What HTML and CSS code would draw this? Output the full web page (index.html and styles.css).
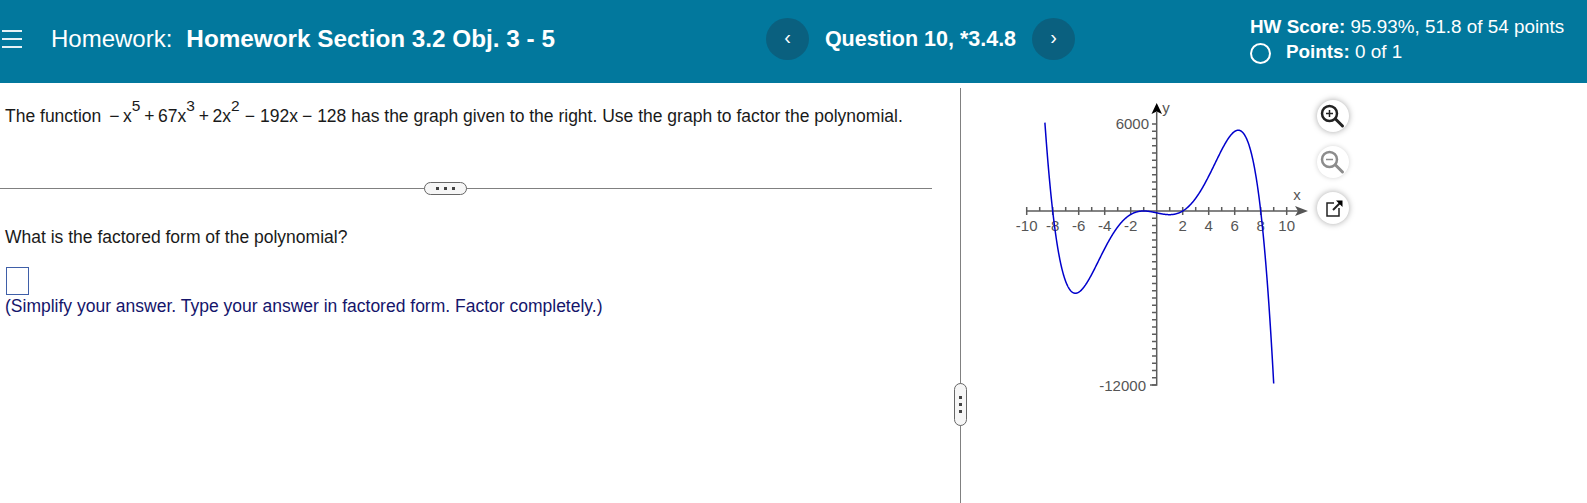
FILE: index.html
```html
<!DOCTYPE html>
<html lang="en">
<head>
  <meta charset="UTF-8" />
  <title>Homework Section 3.2 Obj. 3 - 5</title>
  <link rel="stylesheet" href="styles.css">
</head>
<body>

<!-- top bar -->
<header class="topbar">
  <div class="topbar-left">
    <div class="menu-icon"><span></span><span></span><span></span></div>
    <div class="hw-title">Homework:<b>Homework Section 3.2 Obj. 3 - 5</b></div>
  </div>
  <div class="topbar-nav">
    <div class="nav-btn">&#8249;</div>
    <div class="question-name">Question 10, *3.4.8</div>
    <div class="nav-btn">&#8250;</div>
  </div>
  <div class="topbar-score">
    <div><b>HW Score:</b> 95.93%, 51.8 of 54 points</div>
    <div class="points-row"><span class="points-ring"></span><span><b>Points:</b> 0 of 1</span></div>
  </div>
</header>

<main class="workspace">
  <!-- question text -->
  <section class="question-pane">
    <p class="statement">The function <span class="math"><span class="op">&minus;</span>x<sup>5</sup><span class="op">+</span>67x<sup>3</sup><span class="op">+</span>2x<sup>2</sup><span class="op op-wide">&minus;</span>192x<span class="op op-wide">&minus;</span>128</span> has the graph given to the right. Use the graph to factor the polynomial.</p>
    <div class="separator"><span class="more-pill"><i></i><i></i><i></i></span></div>
    <p class="prompt">What is the factored form of the polynomial?</p>
    <div class="answer-box"></div>
    <p class="hint">(Simplify your answer. Type your answer in factored form. Factor completely.)</p>
  </section>

  <div class="divider"><span class="divider-handle"><i></i><i></i><i></i></span></div>

  <!-- graph and its tools -->
  <section class="graph-pane">
    <svg id="graph" class="graph" width="310" height="305" viewBox="1000 90 310 305">
      <g id="ticks" class="ticks"></g>
      <path class="axis" d="M1026.7 211H1298M1156.7 112V385H1150"/>
      <path class="arrow-x" d="M1295 206L1308 211L1295 216L1298 211Z"/>
      <path class="arrow-y" d="M1156.7 103L1162 114L1156.7 111.5L1151.5 114Z"/>
      <g class="labels">
        <text x="1026.7" y="231">-10</text>
        <text x="1052.7" y="231">-8</text>
        <text x="1078.7" y="231">-6</text>
        <text x="1104.7" y="231">-4</text>
        <text x="1130.7" y="231">-2</text>
        <text x="1182.7" y="231">2</text>
        <text x="1208.7" y="231">4</text>
        <text x="1234.7" y="231">6</text>
        <text x="1260.7" y="231">8</text>
        <text x="1286.7" y="231">10</text>
        <text x="1297" y="200">x</text>
        <text x="1166" y="113">y</text>
        <text class="y-label" x="1149" y="129">6000</text>
        <text class="y-label" x="1146" y="391">-12000</text>
      </g>
      <path id="curve" class="curve"/>
    </svg>
    <div class="tools">
      <div class="tool-btn">
        <svg width="26" height="26" viewBox="0 0 26 26"><circle cx="9.500" cy="10.500" r="7.500" class="lens"/><path class="lens-mark" d="M6 10.500h7M9.500 7v7"/><path class="lens-handle" d="M15.500 16l7 7"/></svg>
      </div>
      <div class="tool-btn tool-off">
        <svg width="26" height="26" viewBox="0 0 26 26"><circle cx="9.500" cy="10.500" r="7.500" class="lens"/><path class="lens-mark" d="M6 10.500h7"/><path class="lens-handle" d="M15.500 16l7 7"/></svg>
      </div>
      <div class="tool-btn">
        <svg width="24" height="24" viewBox="0 0 24 24"><path class="popout" d="M13 7H6V20H18V12"/><path class="popout-arrow" d="M12 14L19 7"/><path d="M15 4.500H21.500V11Z"/></svg>
      </div>
    </div>
  </section>
</main>

<script src="graph.js"></script>
</body>
</html>
```

FILE: styles.css
```css
body {
  margin: 0;
  background: #fff;
  color: #1a1a1a;
  font-family: "Liberation Sans", Arial, sans-serif;
  overflow: hidden;
}

/* top bar */
.topbar {
  display: flex;
  align-items: center;
  height: 83px;
  padding-bottom: 5px;
  box-sizing: border-box;
  background: #02789d;
  color: #fff;
}

.topbar-left {
  display: flex;
  align-items: center;
  width: 766px;
  padding-left: 2px;
  box-sizing: border-box;
}

.menu-icon {
  display: flex;
  flex-direction: column;
  gap: 6px;
  width: 20px;
  margin-right: 29px;
}

.menu-icon span {
  height: 2px;
  background: #e6f2f6;
}

.hw-title {
  font-size: 24px;
}

.hw-title b {
  margin-left: 14px;
  font-size: 24.300px;
}

.topbar-nav {
  display: flex;
  align-items: center;
  width: 484px;
  box-sizing: border-box;
}

.nav-btn {
  width: 43px;
  height: 42px;
  line-height: 39px;
  border-radius: 50%;
  background: #0a607f;
  text-align: center;
  font-size: 20px;
}

.question-name {
  width: 223px;
  text-align: center;
  font-size: 21.500px;
  font-weight: bold;
}

.topbar-score {
  font-size: 18.850px;
  line-height: 24px;
  margin-top: 1px;
}

.points-row {
  display: flex;
  align-items: center;
  gap: 15px;
}

.points-ring {
  width: 17px;
  height: 17px;
  border: 2px solid #fff;
  border-radius: 50%;
  margin-top: 4px;
}

/* main area */
.workspace {
  display: flex;
  height: 420px;
}

.question-pane {
  width: 932px;
  font-size: 17.500px;
}

.question-pane p {
  margin: 0;
  padding-left: 5px;
}

.statement {
  padding-top: 22px;
  line-height: 22px;
}

.math .op {
  margin: 0 3.500px 0 3px;
}

.math .op-wide {
  margin: 0 5px 0 4px;
}

.math sup {
  font-size: 15.500px;
  line-height: 0;
  vertical-align: 11px;
  margin-right: 1px;
}

.separator {
  position: relative;
  height: 1px;
  margin-top: 61px;
  background: #808080;
}

.more-pill {
  position: absolute;
  left: 424px;
  top: -6px;
  display: flex;
  align-items: center;
  justify-content: center;
  gap: 5px;
  width: 41px;
  height: 11px;
  border: 1px solid #666;
  border-radius: 7px;
  background: #f6f6f6;
}

.more-pill i,
.divider-handle i {
  width: 3px;
  height: 3px;
  background: #444;
}

.prompt {
  margin-top: 38px !important;
  line-height: 20px;
}

.answer-box {
  width: 21px;
  height: 26px;
  margin: 20px 0 0 6px;
  border: 1px solid #3f5fa8;
}

.hint {
  margin-top: 0 !important;
  line-height: 22px;
  color: #15156b;
}

.divider {
  position: relative;
  width: 1px;
  height: 415px;
  margin: 5px 0 0 28px;
  background: #808080;
}

.divider-handle {
  position: absolute;
  left: -6px;
  top: 295px;
  display: flex;
  flex-direction: column;
  align-items: center;
  justify-content: center;
  gap: 4px;
  width: 11px;
  height: 41px;
  border: 1px solid #666;
  border-radius: 7px;
  background: #f6f6f6;
}

.graph-pane {
  display: flex;
  padding: 7px 0 0 39px;
}

.graph {
  display: block;
}

.axis {
  fill: none;
  stroke: #5c5c5c;
  stroke-width: 1.5;
}

.ticks {
  stroke: #5c5c5c;
  stroke-width: 1.5;
}

.arrow-x {
  fill: #555;
}

.arrow-y {
  fill: #000;
}

.labels text {
  font-size: 15px;
  fill: #555;
  text-anchor: middle;
}

.labels .y-label {
  text-anchor: end;
}

.curve {
  fill: none;
  stroke: #0000cc;
  stroke-width: 1.5;
}

/* zoom and popout buttons */
.tools {
  display: flex;
  flex-direction: column;
  gap: 14px;
  margin: 10px 0 0 7px;
}

.tool-btn {
  display: flex;
  align-items: center;
  justify-content: center;
  width: 32px;
  height: 32px;
  border-radius: 50%;
  background: #fff;
  box-shadow: 0 0 6px rgba(0, 0, 0, 0.35);
}

.lens {
  fill: none;
  stroke: #222;
  stroke-width: 2.500;
}

.lens-mark {
  fill: none;
  stroke: #222;
  stroke-width: 1.500;
}

.lens-handle {
  fill: none;
  stroke: #222;
  stroke-width: 3;
  stroke-linecap: round;
}

.tool-off {
  box-shadow: 0 0 5px rgba(0, 0, 0, 0.18);
}

.tool-off .lens,
.tool-off .lens-mark,
.tool-off .lens-handle {
  stroke: #8c8c8c;
}

.popout {
  fill: none;
  stroke: #222;
  stroke-width: 1.500;
}

.popout-arrow {
  fill: none;
  stroke: #222;
  stroke-width: 2;
}
```

FILE: graph.js
```js
// scale of the plot, in page pixels
const originX = 1156.7;
const originY = 211;
const unitX = 13;
const unitY = 14.5 / 1000;

function poly(x) {
  return -Math.pow(x, 5) + 67 * Math.pow(x, 3) + 2 * x * x - 192 * x - 128;
}

// curve from y = 6000 on the left down to y = -12000 on the right
let d = '';
for (let x = -8.6; x <= 9.0; x += 0.02) {
  const px = originX + x * unitX;
  const py = originY - poly(x) * unitY;
  d += (d ? 'L' : 'M') + px.toFixed(2) + ' ' + py.toFixed(2);
}
document.getElementById('curve').setAttribute('d', d);

// tick marks
let t = '';
for (let i = -10; i <= 10; i++) {
  if (i === 0) continue;
  const px = originX + i * unitX;
  t += 'M' + px + ' 207V' + (i % 2 === 0 ? 215 : 211);
}
for (let v = -12000; v <= 6000; v += 500) {
  if (v === 0) continue;
  const py = originY - v * unitY;
  t += 'M1152 ' + py + 'H1156.7';
}
const ticks = document.getElementById('ticks');
const path = document.createElementNS('http://www.w3.org/2000/svg', 'path');
path.setAttribute('d', t);
ticks.appendChild(path);
```
